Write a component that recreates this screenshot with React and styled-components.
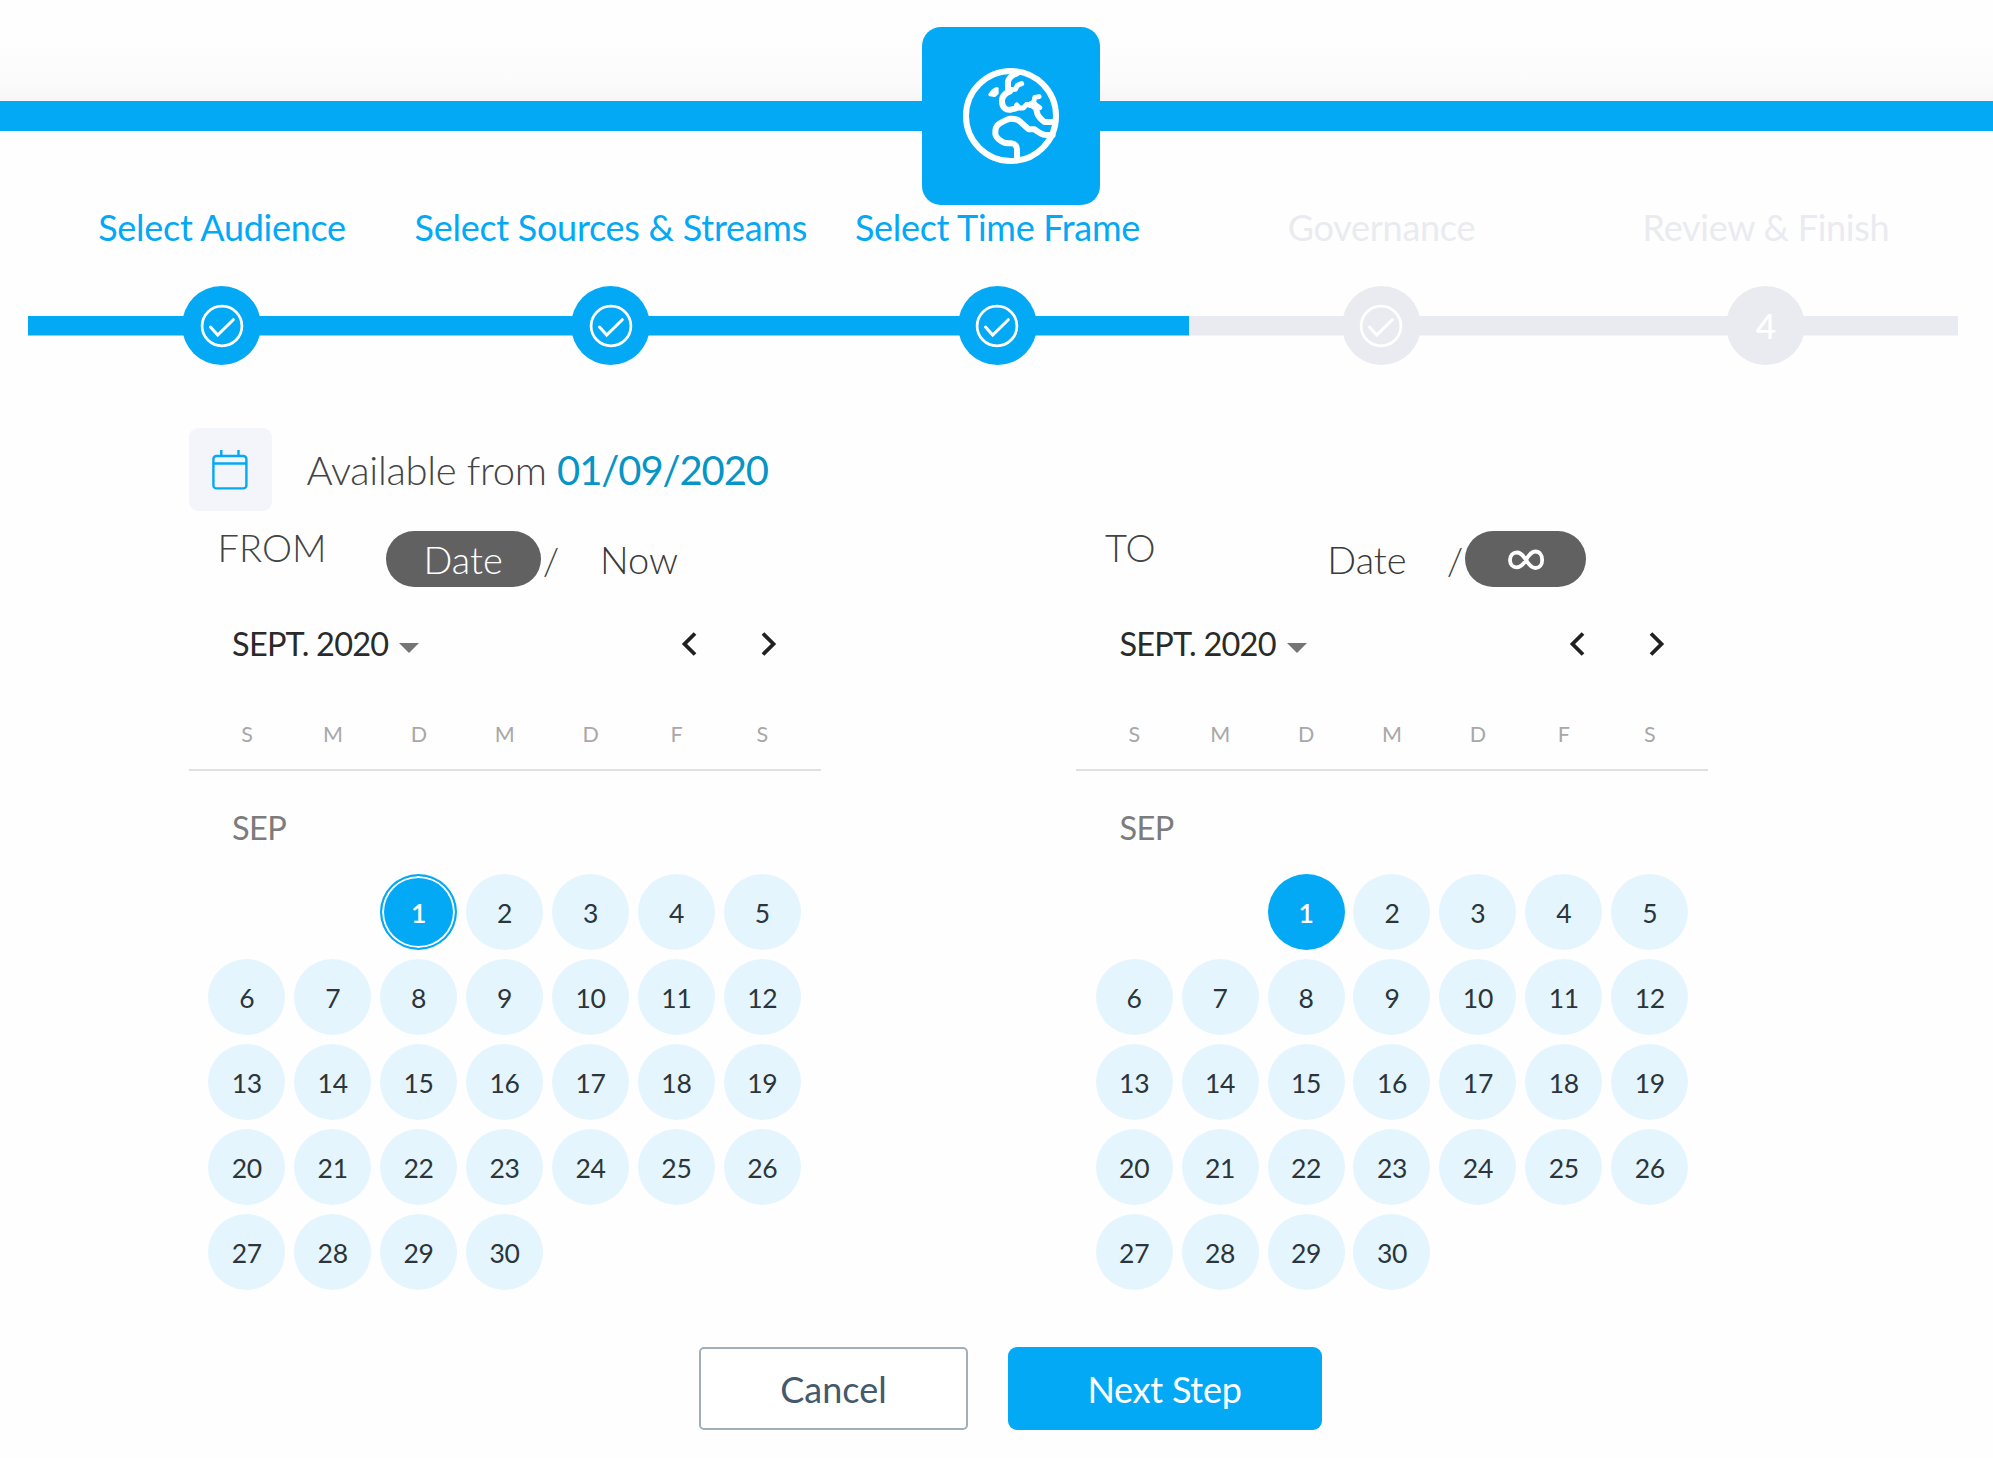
import React from "react";
import styled, { createGlobalStyle, css } from "styled-components";

const blue = "#04a9f5";
const mist = "#eaebf0";

const GlobalStyle = createGlobalStyle`
  *, *::before, *::after { box-sizing: border-box; }
  html, body { margin: 0; padding: 0; background: #fff; }
  body { font-family: Lato, "Liberation Sans", sans-serif; overflow: hidden; }
  button { font: inherit; letter-spacing: inherit; border: 0; padding: 0; background: none; cursor: pointer; }
`;

const Page = styled.div`
  width: 1993px;
  height: 1458px;
  background: #fefefe;
  display: flex;
  flex-direction: column;
`;

const Header = styled.header`
  position: relative;
  flex: none;
  height: 131px;
  background: linear-gradient(#fefefe 42px, #fbfbfb 82px, #f6f6f6 101px);
  border-bottom: 30px solid ${blue};
`;

const LogoTile = styled.div`
  position: absolute;
  z-index: 1;
  left: 922px;
  top: 27px;
  width: 178px;
  height: 178px;
  border-radius: 19px;
  background: ${blue};
  display: flex;
  align-items: center;
  justify-content: center;
`;

const Stepper = styled.ol`
  list-style: none;
  flex: none;
  margin: 0;
  padding: 69.500px 0 0 28.400px;
  height: 297px;
  display: grid;
  grid-template-columns: 387.2px 390.4px 383px 385px 384px;
`;

const Step = styled.li`
  color: ${(p) => (p.$done ? blue : mist)};
  display: flex;
  flex-direction: column;
  align-items: center;
`;

const StepLabel = styled.span`
  font-size: 36px;
  letter-spacing: -0.28px;
  line-height: 52px;
  height: 85.500px;
  white-space: nowrap;
`;

const StepTrack = styled.div`
  width: 100%;
  height: 79px;
  display: flex;
  align-items: center;
  justify-content: center;
  background: linear-gradient(currentColor, currentColor) 0 30px / 100% 19.5px no-repeat;
`;

const StepDot = styled.div`
  width: 79px;
  height: 79px;
  border-radius: 50%;
  background: currentColor;
  display: flex;
  align-items: center;
  justify-content: center;
`;

const StepNumber = styled.span`
  color: #fff;
  font-size: 35px;
  font-weight: 500;
  line-height: 1;
`;

const Availability = styled.section`
  flex: none;
  height: 83px;
  padding-left: 188.6px;
  display: flex;
  align-items: center;
`;

const IconTile = styled.div`
  width: 83px;
  height: 83px;
  border-radius: 9px;
  background: #f4f5fa;
  display: flex;
  align-items: center;
  justify-content: center;
`;

const AvailabilityText = styled.p`
  margin: 0 0 0 35px;
  font-size: 40px;
  line-height: 48px;
  font-weight: 300;
  letter-spacing: -0.33px;
  color: #444;
  white-space: pre;

  strong { font-weight: 400; letter-spacing: -1.1px; color: #0695c6; }
`;

const Calendars = styled.section`
  flex: none;
  height: 836px;
  padding-left: 188.6px;
  display: flex;
  gap: 255px;
`;

const Calendar = styled.div`
  width: 632.4px;
`;

const RangeRow = styled.div`
  height: 92px;
  padding: 20px 0 0 29px;
  display: flex;
  align-items: flex-start;
  font-size: 38px;
  font-weight: 300;
  color: #444;
`;

const RangeName = styled.span`
  width: ${(p) => p.$width}px;
  margin-top: -2px;
  line-height: 36px;
  white-space: nowrap;
`;

const Choice = styled.button`
  width: ${(p) => p.$width}px;
  height: 56px;
  line-height: 58px;
  border-radius: 28px;
  font-weight: 300;
  text-align: center;
  color: #3a3a3a;
  display: flex;
  align-items: center;
  justify-content: center;
  ${(p) => p.$active && css`
    background: #616161;
    color: #fff;
  `}
`;

const Slash = styled.span`
  width: 21px;
  line-height: 58px;
  text-align: center;
`;

const MonthBar = styled.div`
  height: 81px;
  padding: 0 42.500px 0 43.5px;
  display: flex;
  align-items: center;
`;

const MonthButton = styled.button`
  display: flex;
  align-items: center;
  gap: 11px;
  margin-right: auto;
  font-size: 32.5px;
  letter-spacing: -0.8px;
  line-height: 40px;
  color: #2a2a2a;
`;

const Caret = styled.i`
  margin-top: 8px;
  border: 10px solid transparent;
  border-top-color: #757575;
  border-bottom: 0;
`;

const ArrowButton = styled.button`
  width: 18px;
  height: 26px;
  margin-left: 62px;
  display: flex;
`;

const WeekHeader = styled.div`
  height: 87px;
  padding: 37px 15.5px 0;
  border-bottom: 2px solid #e0e0e0;
  display: grid;
  grid-template-columns: repeat(7, 85.9px);
  text-align: center;
  font-size: 21.5px;
  line-height: 26px;
  color: #a8a8a8;
`;

const MonthName = styled.div`
  height: 103px;
  padding: 37px 0 0 43.5px;
  font-size: 32.5px;
  letter-spacing: -0.6px;
  line-height: 40px;
  color: #7c7c7c;
`;

const DayGrid = styled.div`
  padding: 0 15.2px;
  display: grid;
  grid-template-columns: repeat(7, 85.95px);
  grid-auto-rows: 85px;
  justify-items: center;
`;

const Day = styled.button`
  grid-column-start: ${(p) => p.$column || "auto"};
  width: 77px;
  height: 76px;
  border-radius: 50%;
  background: #e4f5fe;
  color: #2c353a;
  font-size: 26.5px;
  letter-spacing: -0.3px;
  line-height: 78px;
  text-align: center;
  ${(p) => p.$selected && css`
    background: ${blue};
    color: #fff;
    font-weight: 600;
  `}
  ${(p) => p.$ringed && css`
    border: 2px solid ${blue};
    box-shadow: inset 0 0 0 2px #fff;
    line-height: 74px;
  `}
`;

const Actions = styled.footer`
  flex: none;
  height: 83px;
  padding-left: 699px;
  display: flex;
  gap: 39.5px;
`;

const ActionButton = styled.button`
  width: ${(p) => (p.$primary ? 314 : 269)}px;
  height: 83px;
  font-size: 36px;
  line-height: 82px;
  text-align: center;
  ${(p) => p.$primary ? css`
    border-radius: 9px;
    background: ${blue};
    color: #fff;
    letter-spacing: -0.25px;
  ` : css`
    border: 2px solid #a3afb8;
    border-radius: 5px;
    background: #fff;
    color: #44596b;
    line-height: 78px;
  `}
`;

const Globe = () => (
  <svg width="96" height="96" viewBox="189 205 288 288" fill="none" stroke="#fff" strokeWidth="18" strokeLinecap="round" strokeLinejoin="round">
    <circle cx="333" cy="349" r="135" />
    <path d="M350 222 C336 226 324 237 324 248 V272 L330 275 C312 282 305 292 306 306 C307 324 318 332 332 330 L348 326" />
    <path d="M350 316 L358 325 H370 L380 314 M326 270 L346 269 L352 257 L365 252" strokeWidth="15" />
    <path d="M380 314 L390 318 L402 304 L404 293 L418 291 M400 306 L408 316 L420 324" strokeWidth="14" />
    <path d="M392 314 L408 325 L411 338 C412 348 422 358 433 367 H464" />
    <path d="M458 406 H437 C424 405 415 398 404 389 H386 L359 365 C351 356 342 357 330 357 C318 359 309 366 297 373 C286 381 286 388 286 402 C286 413 296 418 306 426 C314 432 321 431 334 431 C346 432 352 441 351 452 V482" />
    <path d="M270 285 Q278 272 291 267 V280 L284 287 Z" fill="#fff" strokeWidth="10" />
  </svg>
);

const CheckIcon = () => (
  <svg width="44" height="44" viewBox="0 0 44 44" fill="none" stroke="#fff" strokeWidth="2.7" strokeLinecap="round">
    <circle cx="22" cy="22" r="19.9" />
    <path d="M10.5 23 17.7 31 33.3 15.700" strokeWidth="3" />
  </svg>
);

const CalendarIcon = () => (
  <svg width="36" height="42" viewBox="0 0 36 42" fill="none" stroke={blue} strokeWidth="2.4">
    <rect x="1.4" y="7" width="33" height="32.4" rx="3" />
    <path d="M1.4 14.5H34.4M9.3 1V7M26.5 1V7" />
  </svg>
);

const Infinity = () => (
  <svg width="38" height="24" viewBox="0 -1 38 24" fill="none" stroke="#fff" strokeWidth="3.8">
    <path d="M19 12 C16 7 13.500 4.500 10 4.500 C5.800 4.500 3 7.600 3 12 C3 16.400 5.600 19.300 9.500 19.300 C13.500 19.300 16 17 19 12 C22 6.500 24.500 3.500 28.500 3.500 C32.500 3.500 35.200 7.200 35.200 12 C35.200 16.800 32.500 20 28.500 20 C24.500 20 22 17 19 12 Z" />
  </svg>
);

const Chevron = ({ next }) => (
  <svg width="18" height="26" viewBox="0 0 18 26" fill="none" stroke="#212121" strokeWidth="3.8">
    <path d={next ? "M3 2.500 13.500 13 3 23.500" : "M15 2.500 4.500 13 15 23.500"} />
  </svg>
);

const steps = [
  { label: "Select Audience", done: true },
  { label: "Select Sources & Streams", done: true },
  { label: "Select Time Frame", done: true },
  { label: "Governance" },
  { label: "Review & Finish", number: 4 },
];

const weekdays = ["S", "M", "D", "M", "D", "F", "S"];
const days = Array.from({ length: 30 }, (_, i) => i + 1);

function MonthCalendar({ ringed, children }) {
  return (
    <Calendar>
      <RangeRow>{children}</RangeRow>
      <MonthBar>
        <MonthButton>SEPT. 2020<Caret /></MonthButton>
        <ArrowButton aria-label="Previous month"><Chevron /></ArrowButton>
        <ArrowButton aria-label="Next month"><Chevron next /></ArrowButton>
      </MonthBar>
      <WeekHeader>{weekdays.map((d, i) => <span key={i}>{d}</span>)}</WeekHeader>
      <MonthName>SEP</MonthName>
      <DayGrid>
        {days.map((d) => (
          <Day key={d} $column={d === 1 ? 3 : undefined} $selected={d === 1} $ringed={ringed && d === 1}>{d}</Day>
        ))}
      </DayGrid>
    </Calendar>
  );
}

export default function App() {
  return (
    <>
      <GlobalStyle />
      <Page>
        <Header><LogoTile><Globe /></LogoTile></Header>
        <Stepper>
          {steps.map((s) => (
            <Step key={s.label} $done={s.done}>
              <StepLabel>{s.label}</StepLabel>
              <StepTrack>
                <StepDot>{s.number ? <StepNumber>{s.number}</StepNumber> : <CheckIcon />}</StepDot>
              </StepTrack>
            </Step>
          ))}
        </Stepper>
        <Availability>
          <IconTile><CalendarIcon /></IconTile>
          <AvailabilityText>Available from <strong>01/09/2020</strong></AvailabilityText>
        </Availability>
        <Calendars>
          <MonthCalendar ringed>
            <RangeName $width={168}>FROM</RangeName>
            <Choice $width={155} $active>Date</Choice>
            <Slash>/</Slash>
            <Choice $width={155}>Now</Choice>
          </MonthCalendar>
          <MonthCalendar>
            <RangeName $width={184.500}>TO</RangeName>
            <Choice $width={155}>Date</Choice>
            <Slash>/</Slash>
            <Choice $width={121} $active aria-label="No end date"><Infinity /></Choice>
          </MonthCalendar>
        </Calendars>
        <Actions>
          <ActionButton>Cancel</ActionButton>
          <ActionButton $primary>Next Step</ActionButton>
        </Actions>
      </Page>
    </>
  );
}
